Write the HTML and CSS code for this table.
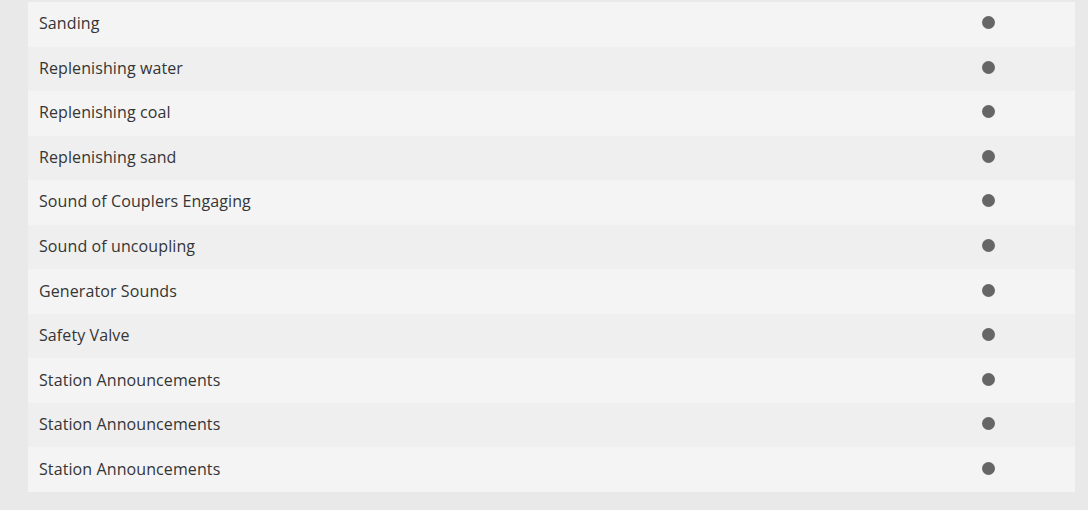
FILE: index.html
```html
<!DOCTYPE html>
<html>
<head>
<meta charset="utf-8">
<link rel="stylesheet" href="styles.css">
</head>
<body>
<div class="page">
  <div class="table">
    <div class="row"><span class="label">Sanding</span><span class="cell"><span class="dot"></span></span></div>
    <div class="row"><span class="label">Replenishing water</span><span class="cell"><span class="dot"></span></span></div>
    <div class="row"><span class="label">Replenishing coal</span><span class="cell"><span class="dot"></span></span></div>
    <div class="row"><span class="label">Replenishing sand</span><span class="cell"><span class="dot"></span></span></div>
    <div class="row"><span class="label">Sound of Couplers Engaging</span><span class="cell"><span class="dot"></span></span></div>
    <div class="row"><span class="label">Sound of uncoupling</span><span class="cell"><span class="dot"></span></span></div>
    <div class="row"><span class="label">Generator Sounds</span><span class="cell"><span class="dot"></span></span></div>
    <div class="row"><span class="label">Safety Valve</span><span class="cell"><span class="dot"></span></span></div>
    <div class="row"><span class="label">Station Announcements</span><span class="cell"><span class="dot"></span></span></div>
    <div class="row"><span class="label">Station Announcements</span><span class="cell"><span class="dot"></span></span></div>
    <div class="row"><span class="label">Station Announcements</span><span class="cell"><span class="dot"></span></span></div>
  </div>
</div>
</body>
</html>
```
FILE: styles.css
```css
html, body {
  margin: 0;
  padding: 0;
  background: #e9e9e9;
}
.page {
  padding: 2px 0 0 28px;
  font-family: "Open Sans", "Liberation Sans", sans-serif;
}
.table {
  width: 1047px;
  display: flex;
  flex-direction: column;
}
.row {
  height: 44.55px;
  box-sizing: border-box;
  padding: 0 0 3px 11px;
  display: flex;
  align-items: center;
  background: #f4f4f4;
}
.row:nth-child(even) {
  background: #efefef;
}
.label {
  flex: 1;
  padding-top: 1px;
  font-size: 16px;
  color: #353535;
  letter-spacing: 0.1px;
}
.cell {
  width: 173px;
  flex-shrink: 0;
  display: flex;
  justify-content: center;
}
.dot {
  width: 13px;
  height: 13px;
  border-radius: 50%;
  background: #666666;
}
```
